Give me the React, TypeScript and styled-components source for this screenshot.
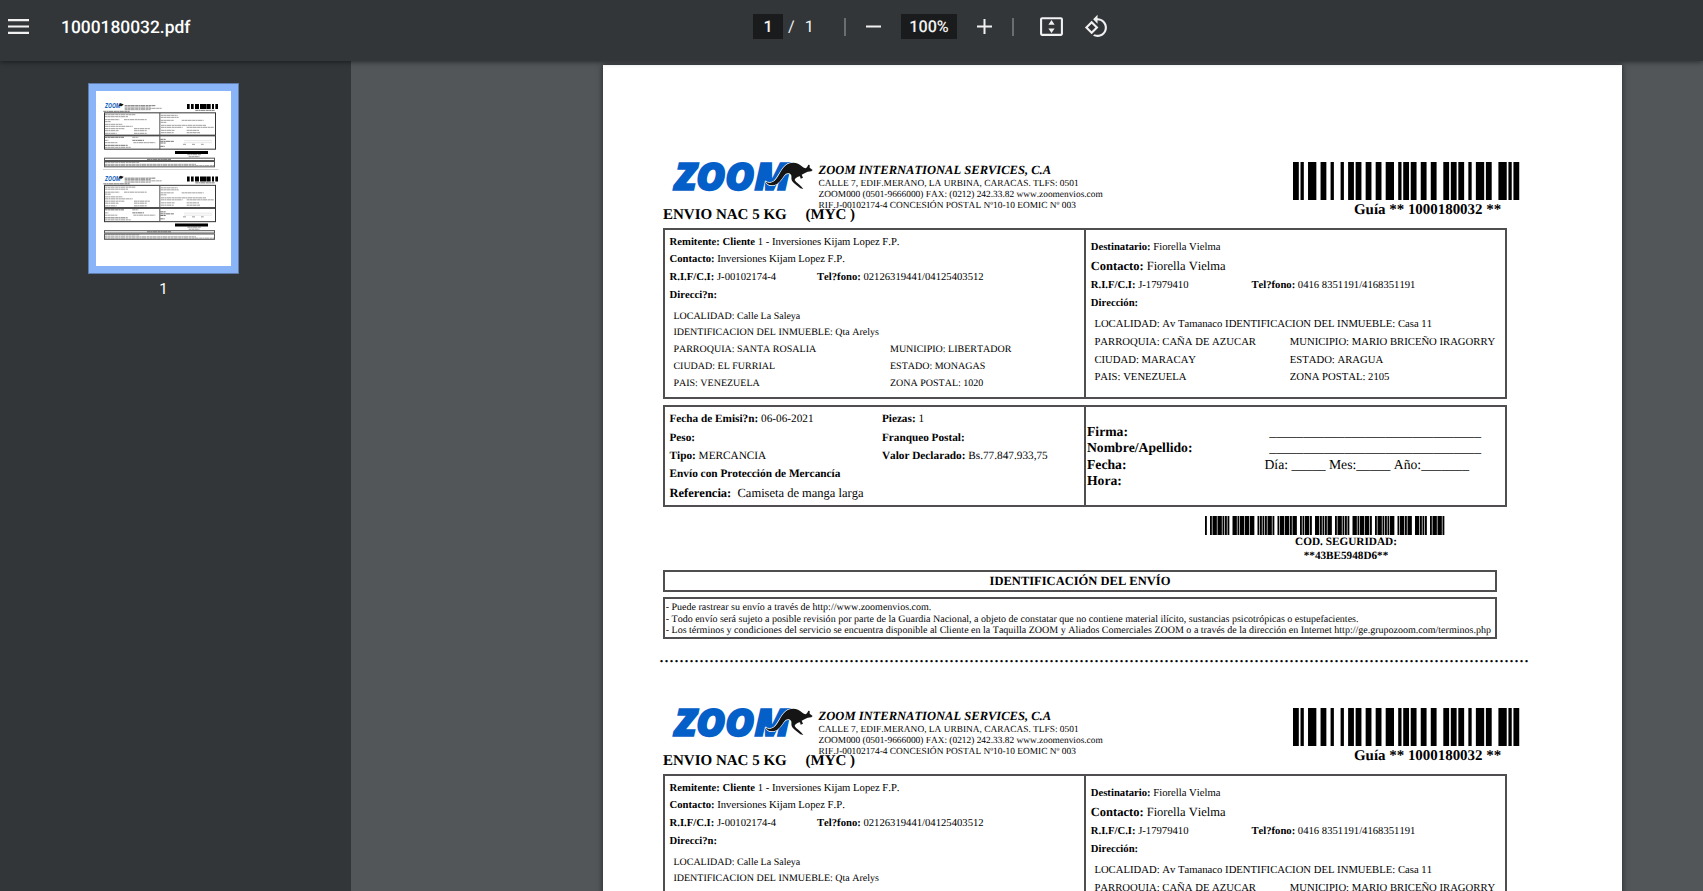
import React from "react";
import styled, { createGlobalStyle } from "styled-components";

const GlobalStyle = createGlobalStyle`
  html, body { margin: 0; padding: 0; }
  body { overflow: hidden; background: #525659; }
  * { box-sizing: border-box; }
`;

/* ---------- viewer chrome ---------- */

const Viewer = styled.div`
  display: flex;
  flex-direction: column;
  width: 100vw;
  height: 100vh;
  overflow: hidden;
  background: #525659;
  font-family: Roboto, "Liberation Sans", sans-serif;
`;

const Toolbar = styled.header`
  position: relative;
  z-index: 2;
  flex: none;
  display: grid;
  grid-template-columns: 753px auto 1fr;
  align-items: start;
  height: 61px;
  padding-top: 14px;
  background: #323639;
  color: #f1f1f1;
  box-shadow: 0 1px 5px rgba(0, 0, 0, 0.5);
`;

const TitleGroup = styled.div`
  display: flex;
  align-items: center;
  gap: 32px;
  height: 25px;
  padding-left: 8px;
`;

const FileName = styled.span`
  padding-top: 3px;
  font-size: 17.4px;
  font-weight: 500;
  line-height: 25px;
  color: #fff;
  text-rendering: geometricPrecision;
`;

const Controls = styled.div`
  display: flex;
  align-items: center;
  height: 25px;
  font-size: 16.2px;
  line-height: 25px;
  text-rendering: geometricPrecision;
`;

const Field = styled.span<{ $w: number }>`
  width: ${(p) => p.$w}px;
  height: 25px;
  background: #191b1c;
  font-weight: 500;
  text-align: center;
`;

const PageCount = styled.span`
  width: 61px;
  padding-left: 5px;
  white-space: pre;
`;

const Slash = styled.span`
  margin-right: 10px;
`;

const Separator = styled.span<{ $left?: number; $right: number }>`
  width: 2px;
  height: 18px;
  margin: 0 ${(p) => p.$right}px 0 ${(p) => p.$left ?? 0}px;
  background: #6b6e70;
`;

const Glyph = styled.svg<{ $left?: number; $gap?: number }>`
  flex: none;
  display: block;
  margin-left: ${(p) => p.$left ?? 0}px;
  margin-right: ${(p) => p.$gap ?? 0}px;
  fill: #f1f1f1;
`;

const Body = styled.div`
  flex: 1;
  display: flex;
  min-height: 0;
`;

const Sidebar = styled.aside`
  flex: none;
  display: flex;
  flex-direction: column;
  align-items: center;
  width: 351px;
  padding: 22px 24px 0 0;
  background: #323639;
`;

const Thumb = styled.div`
  width: 151px;
  height: 191px;
  padding: 7px;
  border: 1px solid #5f7cab;
  background: #8ab4f8;
`;

const ThumbSvg = styled.svg`
  display: block;
  width: 135px;
  height: 175px;
  background: #fff;
`;

const ThumbLabel = styled.div`
  margin-top: 6px;
  font-size: 15px;
  line-height: 18px;
  color: #fff;
`;

const Canvas = styled.main`
  flex: 1;
  min-width: 0;
  padding: 4px 0 0 252px;
  overflow: hidden;
`;

/* ---------- document ---------- */

const Page = styled.article`
  width: 1019px;
  height: 1320px;
  padding: 93px 0 0 60px;
  background: #fff;
  color: #000;
  font-family: "Liberation Serif", "Times New Roman", serif;
  font-kerning: none;
  text-rendering: geometricPrecision;
  box-shadow: 0 0 6px rgba(0, 0, 0, 0.55);
`;

const Slip = styled.section`
  height: 546px;
`;

const SlipHeader = styled.div`
  display: flex;
  height: 70px;
  padding-top: 3px;
`;

const SenderSide = styled.div`
  width: 630px;
`;

const BrandRow = styled.div`
  display: flex;
  padding-left: 9px;
`;

const Address = styled.div`
  padding: 2px 0 0 4.6px;
`;

const GuideSide = styled.div`
  padding-top: 1px;
`;

const Line = styled.div<{
  $h: number;
  $size: number;
  $lh?: number;
  $left?: number;
  $bold?: boolean;
  $italic?: boolean;
  $center?: boolean;
}>`
  display: flex;
  align-items: flex-end;
  justify-content: ${(p) => (p.$center ? "center" : "flex-start")};
  height: ${(p) => p.$h}px;
  padding-left: ${(p) => p.$left ?? 0}px;
  font-size: ${(p) => p.$size}px;
  font-weight: ${(p) => (p.$bold ? 700 : 400)};
  font-style: ${(p) => (p.$italic ? "italic" : "normal")};
  line-height: ${(p) => p.$lh ?? (p.$size > 12 ? 14 : p.$size > 10.2 || p.$size < 10 ? 12 : 10)}px;
  white-space: pre;
`;

const Service = styled(Line)`
  margin-top: -5px;
`;

const Cell = styled.span<{ $w?: number }>`
  flex: none;
  width: ${(p) => (p.$w ? `${p.$w}px` : "auto")};
`;

const Box = styled.div<{ $w: number; $h: number; $mt?: number }>`
  display: flex;
  width: ${(p) => p.$w}px;
  height: ${(p) => p.$h}px;
  margin-top: ${(p) => p.$mt ?? 0}px;
  border: 2px solid #504e50;
`;

const LeftPane = styled.div`
  width: 419px;
`;

const RightPane = styled.div`
  flex: 1;
  border-left: 2px solid #504e50;
`;

const FullPane = styled.div`
  flex: 1;
`;

const Security = styled.div`
  height: 63px;
  padding: 9px 0 0 542px;
`;

const SecurityText = styled.div`
  width: 282px;
`;

const CutLine = styled.div`
  margin: 7px 0 0 -4px;
  font-size: 20px;
  line-height: 20px;
  white-space: nowrap;
`;

const Drawing = styled.svg`
  display: block;
  flex: none;
  overflow: visible;
`;

/* ---------- barcodes ---------- */

// Code 128-C: start, 10, 00, 18, 00, 32, checksum 20, stop
const GUIDE_WIDTHS =
  "211232" + "221312" + "212222" + "223211" + "212222" + "232121" + "221231" + "2331112";

const CODE39: Record<string, string> = {
  "*": "nwnnwnwnn",
  "3": "wnwwnnnnn",
  "4": "nnnwwnnnw",
  "5": "wnnwwnnnn",
  "6": "nnwwwnnnn",
  "8": "wnnwnnwnn",
  "9": "nnwwnnwnn",
  B: "nnwnnwnnw",
  D: "nnnnwwnnw",
  E: "wnnnwwnnn",
};

const code39Widths = (text: string) =>
  text
    .split("")
    .map((c) => CODE39[c].replace(/n/g, "1").replace(/w/g, "3") + "1")
    .join("");

function Bars({ widths, unit, grow, height }: { widths: string; unit: number; grow: number; height: number }) {
  let x = 0;
  const bars: React.ReactElement[] = [];
  widths.split("").forEach((d, i) => {
    const w = Number(d) * unit;
    if (i % 2 === 0) bars.push(<rect key={i} x={x} y={0} width={w + grow} height={height} />);
    x += w;
  });
  return (
    <Drawing width={x} height={height}>
      {bars}
    </Drawing>
  );
}

/* ---------- logo ---------- */

function Logo() {
  const roo =
    "M346 94 C352 101 364 101 373 94 C386 82 391 62 406 48 C415 39 432 36 444 42 C453 47 460 54 467 56 L471 53 L475 45 L479 46 L479 54 L488 61 L484 65 L473 66 C466 68 461 73 455 75 L459 84 L452 87 L450 80 C441 82 435 86 434 91 C439 99 449 105 455 112 L460 118 L451 116 C442 107 429 101 425 91 C423 83 427 77 420 72 C413 69 407 71 402 78 C394 90 386 102 373 106 C360 109 350 104 346 94 Z";
  return (
    <Drawing width="142" height="31" viewBox="66 34 426 93">
      <text
        x="75"
        y="121"
        textLength="346"
        lengthAdjust="spacingAndGlyphs"
        fill="#0460c8"
        stroke="#0460c8"
        strokeWidth="5"
        fontFamily='"Open Sans", sans-serif'
        fontStyle="italic"
        fontWeight="800"
        fontSize="113"
      >
        ZOOM
      </text>
      <path d={roo} fill="#151515" stroke="#fff" strokeWidth="4" paintOrder="stroke" />
    </Drawing>
  );
}

/* ---------- slip ---------- */

function ShippingSlip() {
  return (
    <Slip>
      <SlipHeader>
        <SenderSide>
          <BrandRow>
            <Logo />
            <Address>
              <Line $h={14} $size={12.55} $bold $italic>ZOOM INTERNATIONAL SERVICES, C.A</Line>
              <Line $h={13} $size={9.37}>CALLE 7, EDIF.MERANO, LA URBINA, CARACAS. TLFS: 0501</Line>
              <Line $h={11} $size={9.37}>ZOOM000 (0501-9666000) FAX: (0212) 242.33.82 www.zoomenvios.com</Line>
              <Line $h={11} $size={9.37}>RIF.J-00102174-4 CONCESIÓN POSTAL Nº10-10 EOMIC Nº 003</Line>
            </Address>
          </BrandRow>
          <Service $h={14} $size={15} $lh={12} $bold>{"ENVIO NAC 5 KG     (MYC )"}</Service>
        </SenderSide>
        <GuideSide>
          <Bars widths={GUIDE_WIDTHS} unit={2.505} grow={0.8} height={38} />
          <Line $h={17} $size={14.93} $left={61} $bold>Guía ** 1000180032 **</Line>
        </GuideSide>
      </SlipHeader>

      <Box $w={844} $h={171}>
        <LeftPane>
          <Line $h={18} $size={10.67} $left={4.6}><b>Remitente: Cliente</b> 1 - Inversiones Kijam Lopez F.P.</Line>
          <Line $h={17} $size={10.67} $left={4.6}><b>Contacto:</b> Inversiones Kijam Lopez F.P.</Line>
          <Line $h={18} $size={10.67} $left={4.6}>
            <Cell $w={147.4}><b>R.I.F/C.I:</b> J-00102174-4</Cell>
            <Cell><b>Tel?fono:</b> 02126319441/04125403512</Cell>
          </Line>
          <Line $h={18} $size={10.67} $left={4.6} $bold>Direcci?n:</Line>
          <Line $h={21} $size={10} $left={8.4}>LOCALIDAD: Calle La Saleya</Line>
          <Line $h={16} $size={10} $left={8.4}>IDENTIFICACION DEL INMUEBLE: Qta Arelys</Line>
          <Line $h={17} $size={10} $left={8.4}>
            <Cell $w={216.6}>PARROQUIA: SANTA ROSALIA</Cell>
            <Cell>MUNICIPIO: LIBERTADOR</Cell>
          </Line>
          <Line $h={17} $size={10} $left={8.4}>
            <Cell $w={216.6}>CIUDAD: EL FURRIAL</Cell>
            <Cell>ESTADO: MONAGAS</Cell>
          </Line>
          <Line $h={17} $size={10} $left={8.4}>
            <Cell $w={216.6}>PAIS: VENEZUELA</Cell>
            <Cell>ZONA POSTAL: 1020</Cell>
          </Line>
        </LeftPane>
        <RightPane>
          <Line $h={23} $size={10.67} $left={4.8}><b>Destinatario:</b> Fiorella Vielma</Line>
          <Line $h={20} $size={12.5} $left={4.8}><b>Contacto:</b> Fiorella Vielma</Line>
          <Line $h={18} $size={10.67} $left={4.8}>
            <Cell $w={160.6}><b>R.I.F/C.I:</b> J-17979410</Cell>
            <Cell><b>Tel?fono:</b> 0416 8351191/4168351191</Cell>
          </Line>
          <Line $h={18} $size={10.67} $left={4.8} $bold>Dirección:</Line>
          <Line $h={21} $size={10.68} $left={8.4}>LOCALIDAD: Av Tamanaco IDENTIFICACION DEL INMUEBLE: Casa 11</Line>
          <Line $h={18} $size={10.68} $left={8.4}>
            <Cell $w={195.4}>PARROQUIA: CAÑA DE AZUCAR</Cell>
            <Cell>MUNICIPIO: MARIO BRICEÑO IRAGORRY</Cell>
          </Line>
          <Line $h={18} $size={10.68} $left={8.4}>
            <Cell $w={195.4}>CIUDAD: MARACAY</Cell>
            <Cell>ESTADO: ARAGUA</Cell>
          </Line>
          <Line $h={17} $size={10.68} $left={8.4}>
            <Cell $w={195.4}>PAIS: VENEZUELA</Cell>
            <Cell>ZONA POSTAL: 2105</Cell>
          </Line>
        </RightPane>
      </Box>

      <Box $w={844} $h={102} $mt={6}>
        <LeftPane>
          <Line $h={18} $size={11.26} $left={4.5}>
            <Cell $w={212.4}><b>Fecha de Emisi?n:</b> 06-06-2021</Cell>
            <Cell><b>Piezas:</b> 1</Cell>
          </Line>
          <Line $h={19} $size={11.26} $left={4.5} $bold>
            <Cell $w={212.4}>Peso:</Cell>
            <Cell>Franqueo Postal:</Cell>
          </Line>
          <Line $h={18} $size={11.28} $left={4.5}>
            <Cell $w={212.4}><b>Tipo:</b> MERCANCIA</Cell>
            <Cell><b>Valor Declarado:</b> Bs.77.847.933,75</Cell>
          </Line>
          <Line $h={18} $size={11.32} $left={4.5} $bold>Envío con Protección de Mercancía</Line>
          <Line $h={20} $size={12.51} $left={4.5}><b>Referencia:</b>{"  Camiseta de manga larga"}</Line>
        </LeftPane>
        <RightPane>
          <Line $h={32} $size={13.67} $left={1}>
            <Cell $w={182.3}><b>Firma:</b></Cell>
            <Cell>_______________________________</Cell>
          </Line>
          <Line $h={16} $size={13.67} $left={1}>
            <Cell $w={182.3}><b>Nombre/Apellido:</b></Cell>
            <Cell>_______________________________</Cell>
          </Line>
          <Line $h={17} $size={13.67} $left={1}>
            <Cell $w={177.5}><b>Fecha:</b></Cell>
            <Cell>Día: _____ Mes:_____ Año:_______</Cell>
          </Line>
          <Line $h={16} $size={13.67} $left={1} $bold>Hora:</Line>
        </RightPane>
      </Box>

      <Security>
        <Bars widths={code39Widths("*43BE5948D6*")} unit={1.25} grow={0.6} height={19} />
        <SecurityText>
          <Line $h={13} $size={11.25} $bold $center>COD. SEGURIDAD:</Line>
          <Line $h={14} $size={11.2} $bold $center>**43BE5948D6**</Line>
        </SecurityText>
      </Security>

      <Box $w={834} $h={22}>
        <FullPane>
          <Line $h={16} $size={12.53} $bold $center>IDENTIFICACIÓN DEL ENVÍO</Line>
        </FullPane>
      </Box>

      <Box $w={834} $h={42} $mt={5}>
        <FullPane>
          <Line $h={14} $size={10.03} $left={0.7}>- Puede rastrear su envío a través de http://www.zoomenvios.com.</Line>
          <Line $h={12} $size={10.03} $left={0.7}>- Todo envío será sujeto a posible revisión por parte de la Guardia Nacional, a objeto de constatar que no contiene material ilícito, sustancias psicotrópicas o estupefacientes.</Line>
          <Line $h={11} $size={10.03} $left={0.7}>- Los términos y condiciones del servicio se encuentra disponible al Cliente en la Taquilla ZOOM y Aliados Comerciales ZOOM o a través de la dirección en Internet http://ge.grupozoom.com/terminos.php</Line>
        </FullPane>
      </Box>

      <CutLine>{".".repeat(174)}</CutLine>
    </Slip>
  );
}

/* ---------- thumbnail ---------- */

// [x, y, width] of each tiny line of print, bold ones carry a fourth value
const PRINT: number[][] = [
  [374, 317, 92, 1], [374, 321, 78], [374, 325, 112], [374, 329, 78], [310, 334, 80, 1], [586, 331, 58, 1],
  [314, 344, 92], [314, 350, 70], [314, 359, 44], [372, 359, 68], [314, 365, 19],
  [315, 373, 52], [315, 379, 83], [315, 386, 58], [402, 386, 48], [315, 392, 41], [402, 392, 38], [315, 400, 35], [402, 400, 38],
  [482, 346, 51], [482, 352, 54], [482, 361, 39], [545, 361, 66], [482, 367, 18],
  [483, 376, 135], [483, 382, 65], [560, 382, 82], [483, 391, 41], [560, 391, 37], [483, 398, 38], [560, 398, 40],
  [314, 412, 58, 1], [397, 412, 18], [314, 421, 11], [397, 421, 35, 1], [314, 428, 38], [400, 428, 66], [314, 436, 69, 1], [314, 442, 78],
  [481, 418, 16, 1], [481, 424, 41, 1], [481, 429, 16, 1], [481, 439, 13, 1],
  [549, 433, 10], [576, 433, 10], [603, 433, 8],
  [562, 464, 41], [566, 470, 33], [441, 478, 72, 1],
  [314, 487, 104], [314, 493, 274], [314, 497, 328],
];

function MiniSlip({ dy, cut }: { dy: number; cut?: boolean }) {
  return (
    <g transform={`translate(0 ${dy})`}>
      <text x="315" y="324" textLength="47" lengthAdjust="spacingAndGlyphs" fontFamily='"Open Sans", sans-serif' fontStyle="italic" fontWeight="700" fontSize="20" fill="#1b66bd">
        ZOOM
      </text>
      <path d="M356 317 L361 310 L371 313 L365 319 Z" fill="#111" />
      {PRINT.map(([x, y, w, b], i) => (
        <line key={i} x1={x} x2={x + w} y1={y} y2={y} stroke={b ? "#555" : "#858585"} strokeWidth="2.4" strokeDasharray="9 1 6 1 13 1.5" />
      ))}
      <path d="M552 422H636M552 428H636" stroke="#ccc" strokeWidth="1.5" />
      <path d="M561 312h8v15h-8zM573 312h8v15h-8zM585 312h12v15h-12zM600 312h20v15h-20zM621 312h11v15h-11zM636 312h6v15h-6zM646 312h8v15h-8z" />
      <g fill="none" stroke="#333" strokeWidth="3">
        <rect x="313.5" y="338.5" width="333" height="67" />
        <rect x="313.5" y="407.5" width="333" height="40" />
        <path d="M479.5 338V448" stroke="#555" />
        <rect x="313.5" y="474.5" width="330" height="7" stroke="#555" />
        <rect x="313.5" y="484.5" width="330" height="16" stroke="#555" />
      </g>
      <rect x="525" y="453" width="99" height="9" />
      {cut && <path d="M309 508.5H655" stroke="#bbb" strokeWidth="2" />}
    </g>
  );
}

/* ---------- app ---------- */

export default function App() {
  return (
    <>
      <GlobalStyle />
      <Viewer>
        <Toolbar>
          <TitleGroup>
            <Glyph width="21" height="15" viewBox="0 0 21 15">
              <path d="M0 0h21v2.2H0zM0 6.4h21v2.2H0zM0 12.8h21V15H0z" />
            </Glyph>
            <FileName>1000180032.pdf</FileName>
          </TitleGroup>
          <Controls>
            <Field $w={30}>1</Field>
            <PageCount><Slash>/</Slash>1</PageCount>
            <Separator $right={20} />
            <Glyph width="15" height="15" $gap={20}>
              <path d="M0 6.5h15v2H0z" />
            </Glyph>
            <Field $w={56}>100%</Field>
            <Glyph width="15" height="15" $left={20}>
              <path d="M0 6.5h15v2H0zM6.5 0h2v15h-2z" />
            </Glyph>
            <Separator $left={20} $right={25} />
            <Glyph width="25" height="25" viewBox="0 0 24 24" $gap={20}>
              <path d="M21 3H3c-1.1 0-2 .9-2 2v14c0 1.1.9 2 2 2h18c1.1 0 2-.9 2-2V5c0-1.1-.9-2-2-2zm0 16H3V5h18z" />
              <path d="M12 5.8L15 10.2H9zM12 18.2L9 13.8h6z" />
            </Glyph>
            <Glyph width="25" height="25" viewBox="0 0 24 24">
              <path d="M7.34 6.41L.86 12.9l6.49 6.48 6.49-6.48-6.5-6.49zM3.69 12.9l3.66-3.66L11 12.9l-3.66 3.66-3.65-3.66zm15.67-6.26C17.61 4.88 15.3 4 13 4V.76L8.76 5 13 9.24V6c1.79 0 3.58.68 4.95 2.05 2.73 2.73 2.73 7.17 0 9.9C16.58 19.32 14.79 20 13 20c-.97 0-1.94-.21-2.84-.61l-1.49 1.49C10.02 21.62 11.51 22 13 22c2.3 0 4.61-.88 6.36-2.64 3.52-3.51 3.52-9.21 0-12.72z" />
            </Glyph>
          </Controls>
        </Toolbar>
        <Body>
          <Sidebar>
            <Thumb>
              <ThumbSvg viewBox="288 273 405 525">
                <MiniSlip dy={0} cut />
                <MiniSlip dy={217.5} />
              </ThumbSvg>
            </Thumb>
            <ThumbLabel>1</ThumbLabel>
          </Sidebar>
          <Canvas>
            <Page>
              <ShippingSlip />
              <ShippingSlip />
            </Page>
          </Canvas>
        </Body>
      </Viewer>
    </>
  );
}
